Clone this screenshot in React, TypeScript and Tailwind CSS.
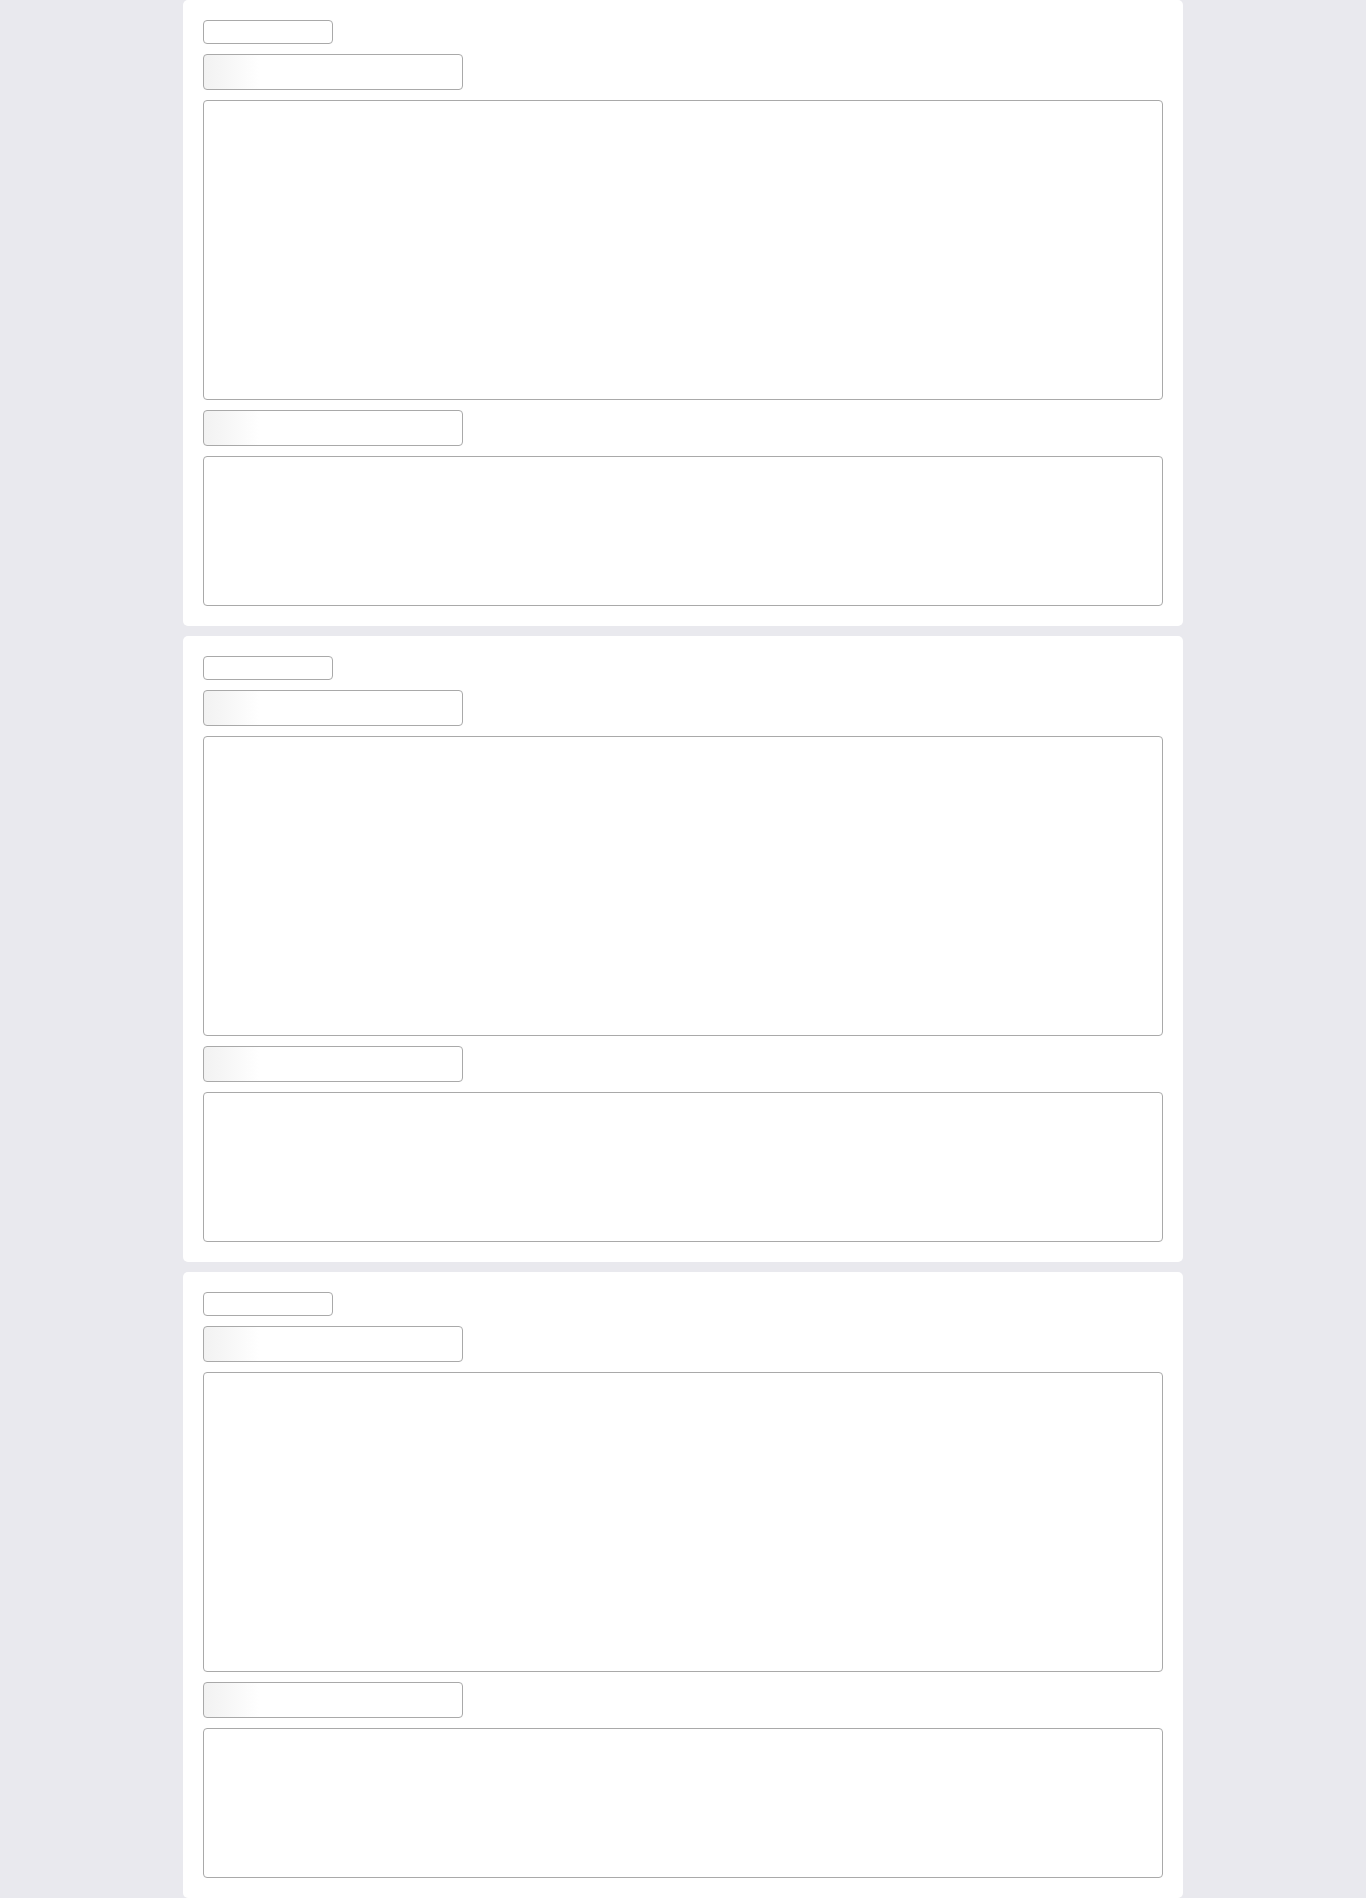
const Block = ({ className }: { className: string }) => (
  <div className={`border border-[#a9a9a9] rounded-[4px] ${className}`} />
);

const Shimmer = () => (
  <div className="h-[36px] w-[260px] rounded-[4px] border border-[#a9a9a9] bg-[linear-gradient(90deg,#f2f2f2_0px,#f6f6f6_20px,#ffffff_55px)]" />
);

function SkeletonCard() {
  return (
    <div className="bg-white rounded-[5px] p-5 flex flex-col gap-[10px]">
      <Block className="h-[24px] w-[130px] bg-white" />
      <Shimmer />
      <Block className="h-[300px] w-full bg-white" />
      <Shimmer />
      <Block className="h-[150px] w-full bg-white" />
    </div>
  );
}

export default function App() {
  return (
    <div className="min-h-screen bg-[#e9e9ee]">
      <div className="w-[1000px] mx-auto flex flex-col gap-[10px]">
        <SkeletonCard />
        <SkeletonCard />
        <SkeletonCard />
      </div>
    </div>
  );
}
